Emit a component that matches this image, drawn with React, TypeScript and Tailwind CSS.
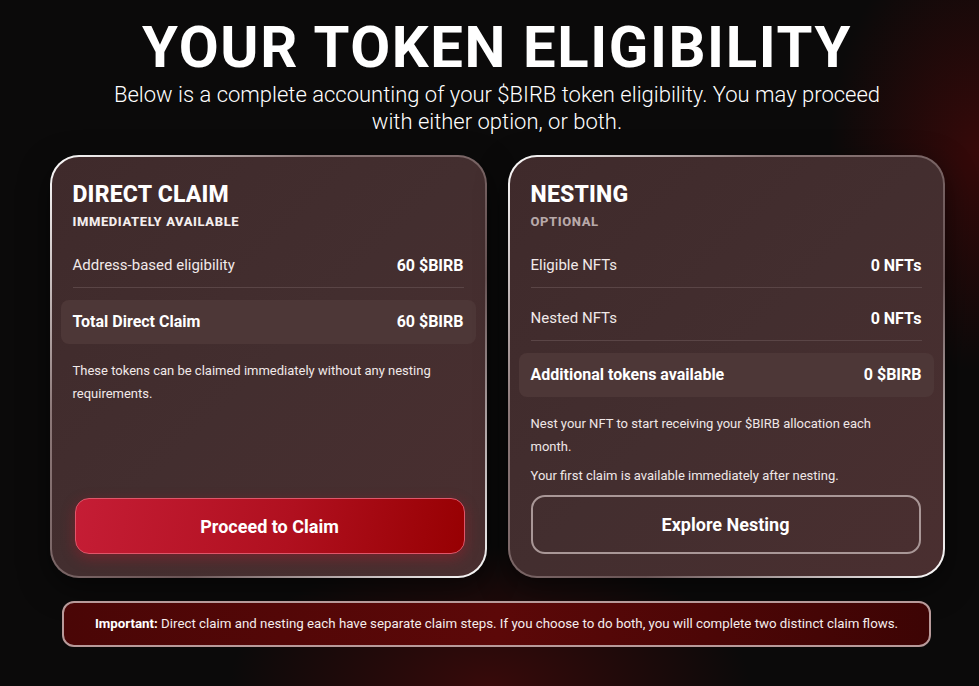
import React from "react";

const font = { fontFamily: "Roboto, 'Noto Sans', sans-serif" };

type Row = { label: string; value: string; total?: boolean };

const Rows = ({ rows }: { rows: Row[] }) => (
  <div className="mt-[13px] flex flex-col">
    {rows.map((r, i) =>
      r.total ? (
        <div
          key={i}
          className="-mx-3 mt-[2px] flex h-[44px] items-center justify-between rounded-lg bg-[#4d3737] px-3 text-[16px] font-bold text-white"
        >
          <span>{r.label}</span>
          <span>{r.value}</span>
        </div>
      ) : (
        <div
          key={i}
          className="mb-[10px] flex h-[43px] items-center justify-between border-b border-[#5a4546] text-[15px] text-[#f1e9e9]"
        >
          <span>{r.label}</span>
          <span className="text-[16px] font-bold text-white">{r.value}</span>
        </div>
      )
    )}
  </div>
);

const Card = ({
  title,
  sub,
  subClass,
  rows,
  children,
}: {
  title: string;
  sub: string;
  subClass: string;
  rows: Row[];
  children: React.ReactNode;
}) => (
  <div className="h-[423px] w-[437px] rounded-[29px] bg-[linear-gradient(135deg,#ffffff_0%,#8c7878_30%,#6a5556_65%,#ffffff_100%)] p-[2px] shadow-[0_10px_30px_rgba(0,0,0,0.5)]">
    <div className="flex h-full flex-col rounded-[27px] bg-[linear-gradient(135deg,#3f2a2b_0%,#432e2f_50%,#4a2f30_100%)] px-[21px] pb-[22px] pt-[24px]">
      <h2 className="text-[23px] font-extrabold leading-[28px] tracking-[0.2px] text-white">{title}</h2>
      <div className={`mt-[3px] text-[13px] font-extrabold uppercase tracking-[0.6px] ${subClass}`}>{sub}</div>
      <Rows rows={rows} />
      {children}
    </div>
  </div>
);

export default function App() {
  return (
    <div
      style={font}
      className="h-[686px] w-full overflow-hidden bg-[#0b0a0a] bg-[radial-gradient(ellipse_150px_220px_at_100%_22%,rgba(90,8,8,0.55),transparent),radial-gradient(ellipse_260px_140px_at_50%_100%,rgba(110,10,10,0.45),transparent)]"
    >
      <div className="flex flex-col items-center pl-[15px] pt-[17px]">
        <h1 className="text-[58px] font-bold leading-[60px] tracking-[1.6px] text-white">YOUR TOKEN ELIGIBILITY</h1>
        <p className="mt-[4px] w-[800px] text-center text-[22px] font-light leading-[27px] text-white">
          Below is a complete accounting of your $BIRB token eligibility. You may proceed
          <br />
          with either option, or both.
        </p>

        <div className="mt-[20px] flex gap-[21px]">
          <Card
            title="DIRECT CLAIM"
            sub="Immediately available"
            subClass="text-[#f4eeee]"
            rows={[
              { label: "Address-based eligibility", value: "60 $BIRB" },
              { label: "Total Direct Claim", value: "60 $BIRB", total: true },
            ]}
          >
            <p className="mt-[15px] max-w-[370px] text-[13px] leading-[23px] text-[#f1e9e9]">
              These tokens can be claimed immediately without any nesting requirements.
            </p>
            <button className="ml-[2px] mt-auto h-[56px] w-[390px] rounded-[14px] border border-[#e0566a] bg-[linear-gradient(100deg,#c51d35_0%,#b0101f_55%,#970002_100%)] text-[18px] font-bold text-white shadow-[0_4px_14px_rgba(200,20,40,0.35)]">
              Proceed to Claim
            </button>
          </Card>

          <Card
            title="NESTING"
            sub="Optional"
            subClass="text-[#b8a9a9]"
            rows={[
              { label: "Eligible NFTs", value: "0 NFTs" },
              { label: "Nested NFTs", value: "0 NFTs" },
              { label: "Additional tokens available", value: "0 $BIRB", total: true },
            ]}
          >
            <p className="mt-[15px] max-w-[370px] text-[13px] leading-[23px] text-[#efe7e7]">
              Nest your NFT to start receiving your $BIRB allocation each month.
            </p>
            <p className="mt-[6px] text-[13px] leading-[23px] text-[#efe7e7]">
              Your first claim is available immediately after nesting.
            </p>
            <button className="mt-auto h-[59px] w-[390px] rounded-[14px] border-2 border-[#a99797] text-[18px] font-bold text-white">
              Explore Nesting
            </button>
          </Card>
        </div>

        <div className="-ml-[15px] mt-[23px] flex h-[46px] w-[869px] translate-x-[7px] items-center justify-center rounded-[12px] border-2 border-[#b89a9a] bg-[linear-gradient(90deg,#4a0606_0%,#5c0808_50%,#3d0404_100%)] text-[13.3px] text-[#f5eded]">
          <span className="font-bold text-white">Important:</span>
          <span>&nbsp;Direct claim and nesting each have separate claim steps. If you choose to do both, you will complete two distinct claim flows.</span>
        </div>
      </div>
    </div>
  );
}
